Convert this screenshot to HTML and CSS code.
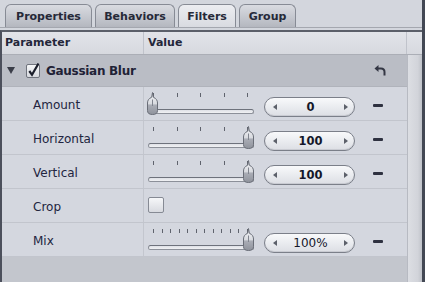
FILE: index.html
```html
<!DOCTYPE html>
<html lang="en">
<head>
  <meta charset="UTF-8" />
  <title>Filters</title>
  <link rel="stylesheet" href="styles.css">
</head>
<body>
  <svg class="defs" width="0" height="0">
    <defs>
      <linearGradient id="thumbFill" x1="0" y1="0" x2="0" y2="1">
        <stop offset="0" stop-color="#f3f4f7"/>
        <stop offset="0.5" stop-color="#d9dbe0"/>
        <stop offset="0.58" stop-color="#a9acb5"/>
        <stop offset="1" stop-color="#8f939c"/>
      </linearGradient>
      <symbol id="thumb" viewBox="0 0 11 23">
        <path d="M5.5 0.5 L6.3 5.2 Q10.5 7 10.5 11 V18.5 Q10.5 22.5 5.5 22.5 Q0.5 22.5 0.5 18.5 V11 Q0.5 7 4.7 5.2 Z" fill="url(#thumbFill)" stroke="#6a6e78"/>
        <line x1="5.5" y1="7.5" x2="5.5" y2="14" stroke="#80848e"/>
      </symbol>
    </defs>
  </svg>

  <div class="panel">
    <div class="tabs">
      <div class="tab tab-properties">Properties</div>
      <div class="tab tab-behaviors">Behaviors</div>
      <div class="tab tab-filters active">Filters</div>
      <div class="tab tab-group">Group</div>
    </div>

    <div class="table">
      <div class="head">
        <div class="hcell hcell-param">Parameter</div>
        <div class="hcell hcell-value">Value</div>
        <div class="hcell hcell-end"></div>
      </div>

      <div class="body">
        <div class="rows">
          <div class="row group-row">
            <div class="cell label-cell">
              <span class="disclosure"></span>
              <span class="check checked">
                <svg width="12" height="12" viewBox="0 0 12 12"><path d="M2.3 6 L5 9.8 L11.5 -1.5" fill="none" stroke="#1b1e2b" stroke-width="2.2"/></svg>
              </span>
              <span class="group-name">Gaussian Blur</span>
            </div>
            <div class="cell value-cell">
              <svg class="reset" width="13" height="11" viewBox="0 0 13 11">
                <path d="M0.5 3.5 L4.5 0 L4.5 7 Z" fill="#343744"/>
                <path d="M4 3.5 H7 Q10.5 3.5 10.5 7 V10.5" fill="none" stroke="#343744" stroke-width="2"/>
              </svg>
            </div>
          </div>

          <div class="row">
            <div class="cell label-cell"><span class="label">Amount</span></div>
            <div class="cell value-cell">
              <div class="slider">
                <div class="ticks"><i></i><i></i><i></i><i></i><i></i></div>
                <div class="track"></div>
                <svg class="knob knob-min" width="11" height="23"><use href="#thumb"/></svg>
              </div>
              <div class="field"><span class="arr arr-l"></span><span class="num">0</span><span class="arr arr-r"></span></div>
              <span class="minus"></span>
            </div>
          </div>

          <div class="row">
            <div class="cell label-cell"><span class="label">Horizontal</span></div>
            <div class="cell value-cell">
              <div class="slider">
                <div class="ticks"><i></i><i></i><i></i><i></i><i></i></div>
                <div class="track"></div>
                <svg class="knob knob-max" width="11" height="23"><use href="#thumb"/></svg>
              </div>
              <div class="field"><span class="arr arr-l"></span><span class="num">100</span><span class="arr arr-r"></span></div>
              <span class="minus"></span>
            </div>
          </div>

          <div class="row">
            <div class="cell label-cell"><span class="label">Vertical</span></div>
            <div class="cell value-cell">
              <div class="slider">
                <div class="ticks"><i></i><i></i><i></i><i></i><i></i></div>
                <div class="track"></div>
                <svg class="knob knob-max" width="11" height="23"><use href="#thumb"/></svg>
              </div>
              <div class="field"><span class="arr arr-l"></span><span class="num">100</span><span class="arr arr-r"></span></div>
              <span class="minus"></span>
            </div>
          </div>

          <div class="row">
            <div class="cell label-cell"><span class="label">Crop</span></div>
            <div class="cell value-cell">
              <span class="box"></span>
            </div>
          </div>

          <div class="row">
            <div class="cell label-cell"><span class="label">Mix</span></div>
            <div class="cell value-cell">
              <div class="slider">
                <div class="ticks"><i></i><i></i><i></i><i></i><i></i><i></i><i></i><i></i><i></i><i></i><i></i><i></i></div>
                <div class="track"></div>
                <svg class="knob knob-max" width="11" height="23"><use href="#thumb"/></svg>
              </div>
              <div class="field"><span class="arr arr-l"></span><span class="num pct">100%</span><span class="arr arr-r"></span></div>
              <span class="minus"></span>
            </div>
          </div>

          <div class="filler"></div>
        </div>
        <div class="strip"></div>
      </div>
    </div>
  </div>
</body>
</html>
```

FILE: styles.css
```css
html, body { margin: 0; padding: 0; }
body {
  background: #d3d6dd;
  font-family: "DejaVu Sans", "Liberation Sans", sans-serif;
  color: #22253a;
  overflow: hidden;
}
.defs { position: absolute; }

.panel {
  width: 425px;
  height: 282px;
  box-sizing: border-box;
  border-right: 3px solid #434854;
  display: flex;
  flex-direction: column;
}

/* tabs */
.tabs {
  display: flex;
  gap: 3px;
  height: 28px;
  box-sizing: border-box;
  padding: 4px 0 0 5px;
  border-bottom: 1px solid #a4a7af;
}
.tab {
  height: 23px;
  box-sizing: border-box;
  border: 1px solid #878b95;
  border-bottom: none;
  border-radius: 6px 6px 0 0;
  background: linear-gradient(#d9dbe1, #b4b7bf);
  font-size: 11px;
  font-weight: bold;
  color: #262938;
  display: flex;
  align-items: center;
  justify-content: center;
  padding-top: 1px;
}
.tab.active { background: linear-gradient(#ecedf1, #d9dbe1); }
.tab-properties { width: 87px; }
.tab-behaviors { width: 80px; }
.tab-filters { width: 58px; }
.tab-group { width: 57px; }

/* table */
.table {
  margin-top: 2px;
  flex: 1;
  display: flex;
  flex-direction: column;
  border-top: 2px solid #5b5f69;
  border-left: 2px solid #4c505c;
}
.head {
  display: flex;
  height: 23px;
  box-sizing: border-box;
  border-bottom: 1px solid #abaeb6;
  background: linear-gradient(#e2e4e9, #d7d9df);
}
.hcell {
  font-size: 11px;
  font-weight: bold;
  line-height: 22px;
  color: #23263a;
  box-sizing: border-box;
  border-right: 1px solid #c0c3cb;
}
.hcell-param { width: 142px; padding-left: 3px; }
.hcell-value { flex: 1; padding-left: 4px; }
.hcell-end { width: 15px; border-right: none; }

.body { flex: 1; display: flex; }
.rows { flex: 1; display: flex; flex-direction: column; }
.strip {
  width: 15px;
  box-sizing: border-box;
  border-left: 1px solid #b7bac2;
  background: linear-gradient(90deg, #dcdee3, #d2d4da 70%, #bfc2c9);
}

.row {
  display: flex;
  height: 34px;
  box-sizing: border-box;
  border-bottom: 1px solid #c2c5cd;
  background: #d4d7df;
}
.cell { box-sizing: border-box; display: flex; align-items: flex-start; }
.label-cell { width: 142px; border-right: 1px solid #c3c6ce; }
.value-cell { flex: 1; padding-left: 4px; }

.label {
  font-size: 12px;
  line-height: 33px;
  padding: 2px 0 0 31px;
  color: #222540;
}

/* group row */
.group-row {
  height: 32px;
  background: #babdc5;
  border-bottom: 1px solid #b0b3bb;
}
.group-row .label-cell { border-right-color: #babdc5; align-items: center; }
.disclosure {
  margin-left: 5px;
  width: 0;
  height: 0;
  border-left: 4px solid transparent;
  border-right: 4px solid transparent;
  border-top: 7px solid #3a3d48;
}
.check {
  margin-left: 11px;
  width: 14px;
  height: 14px;
  box-sizing: border-box;
  border: 1px solid #6f737d;
  border-radius: 2px;
  background: linear-gradient(#f5f6f8, #d6d8de);
  display: flex;
  align-items: center;
  justify-content: center;
}
.check svg { overflow: visible; }
.group-name {
  margin-left: 6px;
  font-size: 12px;
  font-weight: bold;
  letter-spacing: -0.3px;
  color: #1f2236;
}
.group-row .value-cell { justify-content: flex-end; align-items: center; padding-right: 20px; }

/* slider */
.slider {
  position: relative;
  width: 106px;
  height: 23px;
  margin-top: 5px;
}
.ticks {
  display: flex;
  justify-content: space-between;
  padding: 0 6px 0 5px;
  margin-top: 1px;
}
.ticks i { display: block; width: 1px; height: 4px; background: #5f636d; }
.track {
  margin-top: 12px;
  height: 5px;
  box-sizing: border-box;
  border: 1px solid #8c9099;
  border-top-color: #6e727c;
  border-radius: 3px;
  background: linear-gradient(#dfe1e6, #f0f1f4);
}
.knob { position: absolute; top: 0; }
.knob-min { left: -1px; }
.knob-max { left: 95px; }

/* value field */
.field {
  margin: 10px 0 0 10px;
  width: 91px;
  height: 20px;
  box-sizing: border-box;
  border: 1px solid #7b7f89;
  border-radius: 10px;
  background: linear-gradient(#f8f9fb, #dcdee4);
  box-shadow: inset 0 -1px 0 #c9cbd2;
  display: flex;
  align-items: center;
  padding: 0 6px 0 8px;
}
.num {
  flex: 1;
  text-align: center;
  font-size: 11.5px;
  font-weight: bold;
  color: #15172a;
}
.num.pct { font-weight: normal; font-size: 12px; }
.arr { width: 0; height: 0; border-top: 3.5px solid transparent; border-bottom: 3.5px solid transparent; }
.arr-l { border-right: 4px solid #5c606a; }
.arr-r { border-left: 4px solid #5c606a; }

.minus {
  margin: 17px 0 0 18px;
  width: 10px;
  height: 3px;
  border-radius: 1px;
  background: #2e3140;
}

.box {
  margin-top: 8px;
  width: 16px;
  height: 16px;
  box-sizing: border-box;
  border: 1px solid #868a94;
  border-radius: 2px;
  background: linear-gradient(#f6f7f9, #d8dae0);
}

.filler { flex: 1; background: #c3c6cd; }
```
